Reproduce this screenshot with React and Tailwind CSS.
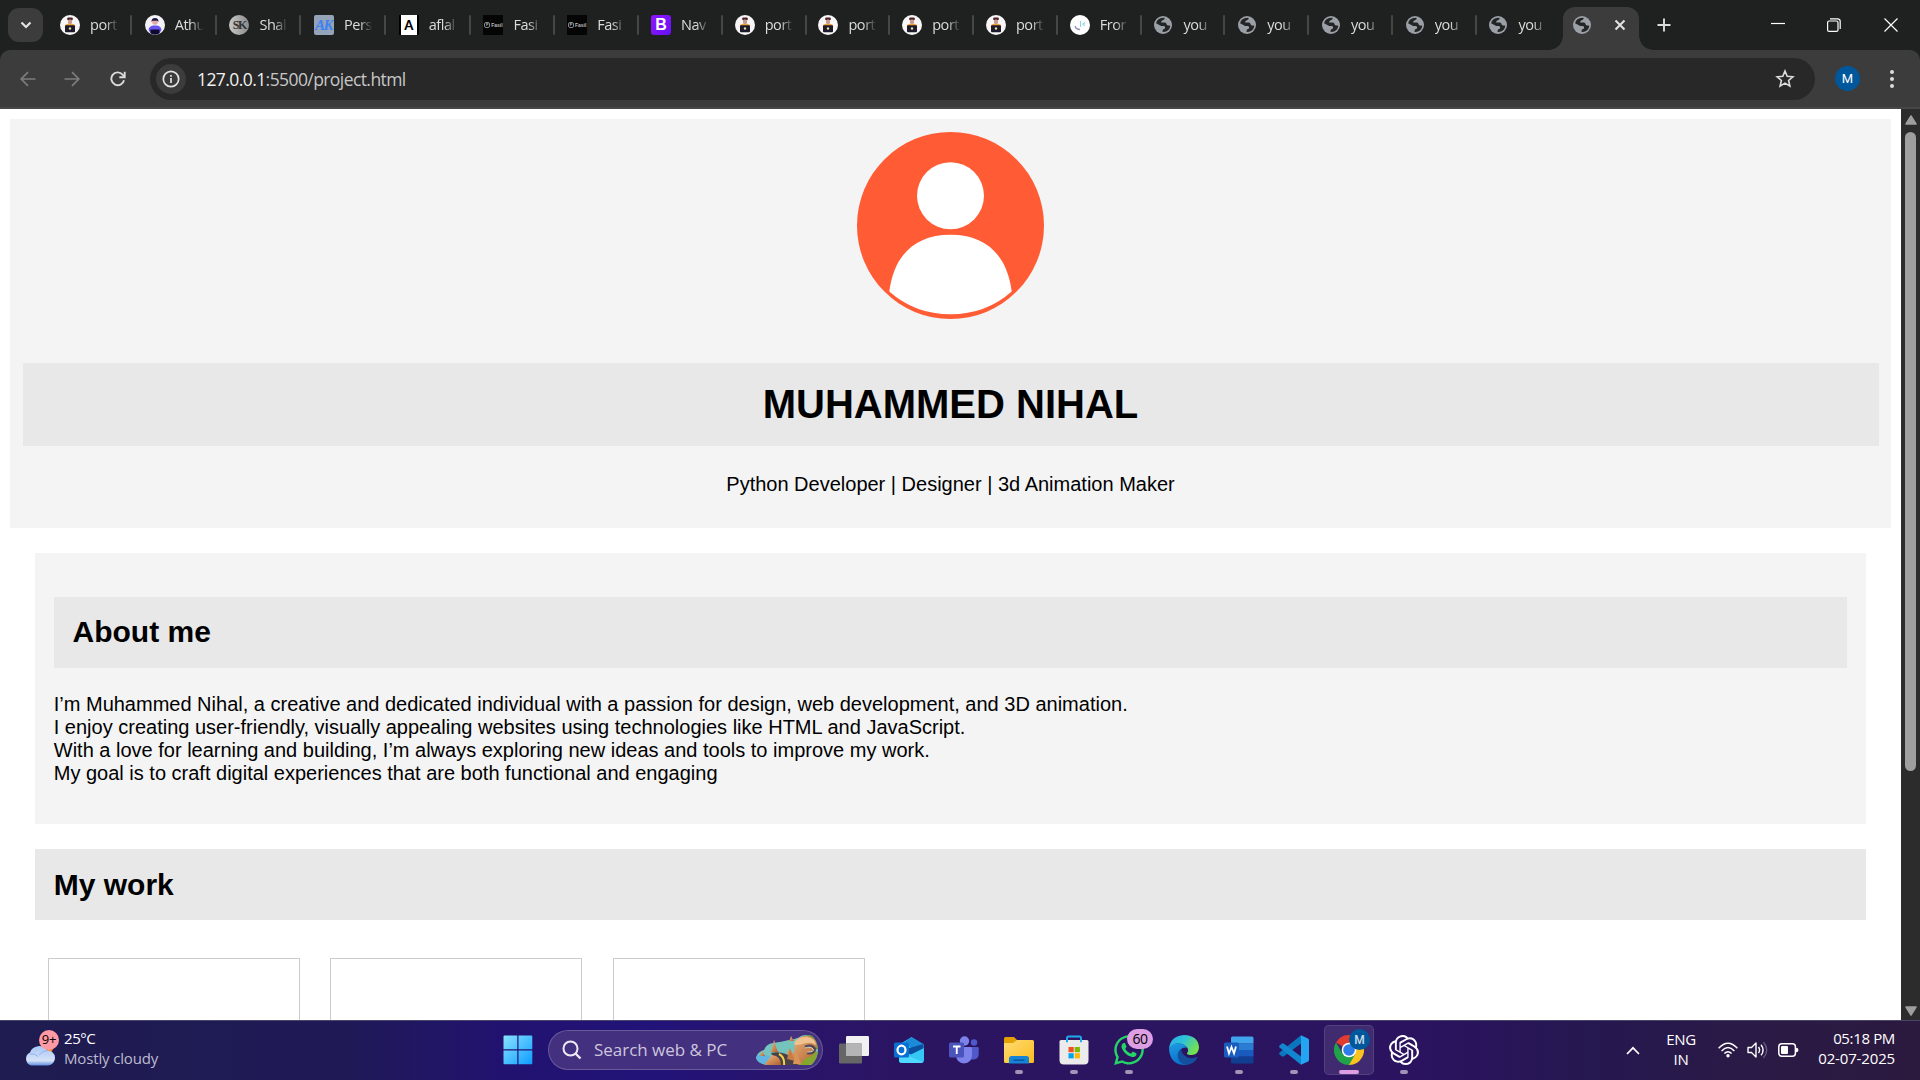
import React from "react";
import { SiOpenai } from "react-icons/si";
import { FaWhatsapp } from "react-icons/fa";

function PortIcon() {
  return (
    <svg viewBox="0 0 20 20" className="size-5">
      <circle cx="10" cy="10" r="10" fill="#f8f6f6" />
      <rect x="7.200" y="2.600" width="5.600" height="2.600" rx="1" fill="#4a2228" />
      <rect x="8" y="4.600" width="4" height="4.400" rx="1.500" fill="#c99a92" />
      <path d="M4.500 11.500Q5 9 8 8.800h4q3 .2 3.500 2.700z" fill="#eda33b" />
      <rect x="5" y="10.200" width="10" height="7" rx="1" fill="#1c1a2b" />
      <circle cx="10" cy="13.500" r="1.200" fill="#e8dfa0" />
    </svg>
  );
}

function AthIcon() {
  return (
    <svg viewBox="0 0 20 20" className="size-5">
      <circle cx="10" cy="10" r="10" fill="#f4f2f7" />
      <path d="M3.500 15Q4 11 8 10.500h4q4 .5 4.500 4.500l-2.500 4H6z" fill="#6655f4" />
      <circle cx="10" cy="7" r="2.800" fill="#e7a9a0" />
      <path d="M6.500 7Q6.300 3 10 3t3.500 4l-1-1.300H7.500z" fill="#1b1740" />
      <path d="M5.500 14.500h9v3.500Q10 21.500 5.500 18z" fill="#0e0a2c" />
    </svg>
  );
}

function SkIcon() {
  return (
    <div className="flex size-5 items-center justify-center rounded-full bg-gradient-to-r from-[#c9c9c9] to-[#8b8b8b] font-['Liberation_Serif',serif] text-[12px] font-bold leading-none tracking-[-1.5px] text-[#333]">
      SK
    </div>
  );
}

function AkIcon() {
  return (
    <div className="flex size-5 items-center justify-center rounded-[2px] bg-[#94a3b8] pr-px font-['Liberation_Serif',serif] text-[15px] font-bold italic leading-none tracking-[-1.5px] text-[#3b82f6]">
      AK
    </div>
  );
}

function AIcon() {
  return (
    <div className="flex size-5 items-center justify-center bg-black">
      <div className="flex h-5 w-4 items-center justify-center bg-white font-['Lato',sans-serif] text-[13px] font-black leading-none text-black">A</div>
    </div>
  );
}

function FasilIcon() {
  return (
    <div className="flex size-5 items-center justify-center gap-px bg-[#050505] font-['Liberation_Sans',sans-serif] text-[5px] font-bold leading-none text-[#bdbdbd]">
      <span className="flex size-[6px] items-center justify-center rounded-[2px] border border-[#888] text-[4px]">F</span>
      Fasil
    </div>
  );
}

function BootIcon() {
  return (
    <div className="flex size-5 items-center justify-center rounded-[3px] bg-gradient-to-br from-[#9013fe] to-[#6610f2] font-['Liberation_Sans',sans-serif] text-[16px] font-bold leading-none text-white">
      B
    </div>
  );
}

function FroIcon() {
  return (
    <svg viewBox="0 0 20 20" className="size-5">
      <circle cx="10" cy="10" r="10" fill="#fff" />
      <path d="M5 11q1 3.500 5 3.500" fill="none" stroke="#8f8fc4" strokeWidth="1.300" />
      <path d="M10.500 6v6M12.500 9.200l2.500-1.700M12.500 9.200l2.500 1.200" fill="none" stroke="#8ed3e0" strokeWidth="1.100" />
    </svg>
  );
}

function GlobeIcon() {
  return (
    <svg viewBox="0 0 20 20" className="size-5 shrink-0">
      <circle cx="10" cy="10" r="9" fill="#9aa0a6" />
      <path d="M11.800 2.900Q11.500 4.800 9.800 5.200 8 5.600 8.200 7.500h3.600q1.600 0 1.700 1.600.1 1.500 1.700 1.400l2-.1Q17 14.500 13.600 16.300 11.500 17.300 9.600 17v-1.300q0-1.500 1.500-1.700 1.300-.3 1-1.800-.2-1.300-1.700-1.300H8.200L3.100 8.200Q4.500 3 10 2.800z" fill="#242625" />
    </svg>
  );
}

const tabs = [
  [PortIcon, "port"],
  [AthIcon, "Athu"],
  [SkIcon, "Shal"],
  [AkIcon, "Pers"],
  [AIcon, "aflal"],
  [FasilIcon, "Fasi"],
  [FasilIcon, "Fasi"],
  [BootIcon, "Nav"],
  [PortIcon, "port"],
  [PortIcon, "port"],
  [PortIcon, "port"],
  [PortIcon, "port"],
  [FroIcon, "Fror"],
  [GlobeIcon, "you"],
  [GlobeIcon, "you"],
  [GlobeIcon, "you"],
  [GlobeIcon, "you"],
  [GlobeIcon, "you"],
];

function Tab({ Icon, label, wide, last }) {
  return (
    <div className={`flex shrink-0 items-center ${wide ? "w-[84.700px]" : "w-[83.750px]"}`}>
      <Icon />
      <div className="ml-[10px] w-[34px] whitespace-nowrap text-[14.500px] leading-5 tracking-[-0.450px] text-[#dcdcdc] [mask-image:linear-gradient(to_right,#000_45%,transparent_84%)]">
        {label}
      </div>
      {!last && <div className="ml-[6px] h-5 w-[2px] rounded bg-[#454746]" />}
    </div>
  );
}

function TabStrip() {
  return (
    <div className="flex h-[50px] shrink-0 items-stretch bg-[#1f2120]">
      <div className="flex w-[60px] shrink-0 items-center pl-2">
        <div className="flex h-[34px] w-[35px] items-center justify-center rounded-[11px] bg-[#3c3c3c]">
          <svg viewBox="0 0 12 8" className="h-2 w-3">
            <path d="M1.500 1.500L6 6l4.500-4.500" fill="none" stroke="#e3e3e3" strokeWidth="2.200" />
          </svg>
        </div>
      </div>
      {tabs.map(([Icon, label], i) => (
        <Tab key={i} Icon={Icon} label={label} wide={i < 5} last={i === tabs.length - 1} />
      ))}
      <div className="-ml-[23px] flex w-[106px] shrink-0 items-end">
        <div className="size-[14px] shrink-0 bg-[radial-gradient(circle_at_0_0,transparent_13.500px,#3c3c3c_14px)]" />
        <div className="flex h-[43px] w-[76px] shrink-0 items-center rounded-t-[12px] bg-[#3c3c3c] pb-[7px] pl-[9px]">
          <GlobeIcon />
          <svg viewBox="0 0 12 12" className="ml-[22px] size-3">
            <path d="M1.500 1.500l9 9M10.500 1.500l-9 9" stroke="#e3e3e3" strokeWidth="2" />
          </svg>
        </div>
        <div className="size-[14px] shrink-0 bg-[radial-gradient(circle_at_100%_0,transparent_13.500px,#3c3c3c_14px)]" />
      </div>
      <div className="flex flex-1 items-center pl-[2px]">
        <svg viewBox="0 0 14 14" className="size-[14px]">
          <path d="M7 .5v13M.5 7h13" stroke="#dcdcdc" strokeWidth="1.900" />
        </svg>
        <div className="ml-auto flex items-center gap-[42px] pr-[22px]">
          <svg viewBox="0 0 14 14" className="size-[14px]">
            <path d="M0 5.500h14" stroke="#fff" strokeWidth="1.200" />
          </svg>
          <svg viewBox="0 0 14 14" className="size-[14px]">
            <rect x=".6" y="3" width="10.400" height="10.400" rx="1.500" fill="none" stroke="#fff" strokeWidth="1.200" />
            <path d="M3 .8h7.500q2.700 0 2.700 2.700V11" fill="none" stroke="#fff" strokeWidth="1.200" />
          </svg>
          <svg viewBox="0 0 14 14" className="ml-[1px] size-[14px]">
            <path d="M.5.500l13 13M13.500.500l-13 13" stroke="#fff" strokeWidth="1.200" />
          </svg>
        </div>
      </div>
    </div>
  );
}

function Toolbar() {
  return (
    <div className="h-[59px] shrink-0 bg-[#1f2120]">
      <div className="flex h-full items-center rounded-t-[10px] border-b-2 border-[#474747] bg-[#3c3c3c] pl-[20px]">
        <svg viewBox="0 0 16 16" className="size-4">
          <path d="M15.500 8H1.500M8 1.200L1.200 8 8 14.800" fill="none" stroke="#7c7c7c" strokeWidth="1.700" />
        </svg>
        <svg viewBox="0 0 16 16" className="ml-[28px] size-4">
          <path d="M.5 8h14M8 1.200L14.800 8 8 14.800" fill="none" stroke="#7c7c7c" strokeWidth="1.700" />
        </svg>
        <svg viewBox="0 0 16 16" className="ml-[30px] size-4">
          <path d="M14 9.200A6.400 6.400 0 1 1 12.600 3.600L14.500 5.500" fill="none" stroke="#dcdcdc" strokeWidth="1.900" />
          <path d="M14.700.800V6.200H9.300" fill="none" stroke="#dcdcdc" strokeWidth="1.900" />
        </svg>
        <div className="ml-[24px] flex h-[42px] w-[1665px] items-center rounded-full bg-[#282828] pl-[6px] pr-[20px]">
          <div className="flex size-[30px] items-center justify-center rounded-full bg-[#3c3c3c]">
            <svg viewBox="0 0 18 18" className="size-[18px]">
              <circle cx="9" cy="9" r="7.700" fill="none" stroke="#e3e3e3" strokeWidth="1.700" />
              <path d="M9 8v5M9 5v1.700" stroke="#e3e3e3" strokeWidth="1.700" />
            </svg>
          </div>
          <div className="ml-[11px] text-[17.500px] leading-6 tracking-[-0.580px] text-[#c7c7c7]">
            <span className="text-[#f1f1f1]">127.0.0.1</span>:5500/project.html
          </div>
          <svg viewBox="0 0 20 20" className="ml-auto size-5">
            <path d="M10 2l2.200 5.300 5.700.5-4.300 3.700 1.300 5.600L10 14.100l-4.900 3 1.300-5.600L2.100 7.800l5.700-.5z" fill="none" stroke="#dcdcdc" strokeWidth="1.600" />
          </svg>
        </div>
        <div className="ml-[20px] flex size-[25px] items-center justify-center rounded-full bg-[#01579b] font-['Roboto',sans-serif] text-[13px] leading-none text-white">
          M
        </div>
        <div className="ml-[30px] flex flex-col gap-[3px]">
          <div className="size-1 rounded-full bg-[#dcdcdc]" />
          <div className="size-1 rounded-full bg-[#dcdcdc]" />
          <div className="size-1 rounded-full bg-[#dcdcdc]" />
        </div>
      </div>
    </div>
  );
}

function Portfolio() {
  return (
    <main className="h-full flex-1 overflow-hidden bg-white p-[10px] font-['Liberation_Sans',Arial,sans-serif] text-[20px] leading-[23px] text-black">
      <header className="h-[409px] bg-[#f4f4f4] px-[12.500px] pt-[13px] text-center">
        <svg viewBox="0 0 187 187" className="mx-auto block size-[187px]">
          <circle cx="93.500" cy="93.500" r="93.500" fill="#ff5c35" />
          <circle cx="93.500" cy="63.700" r="33.500" fill="#fff" />
          <path d="M32.300 159.500C37 123 58 102.700 93.500 102.700S150 123 154.700 159.500Q129 182.300 93.500 182.300T32.300 159.500z" fill="#fff" />
        </svg>
        <h1 className="mt-[44px] bg-[#e8e8e8] py-[19px] text-[40px] font-bold leading-[45px]">MUHAMMED NIHAL</h1>
        <p className="mt-[27px]">Python Developer | Designer | 3d Animation Maker</p>
      </header>
      <div className="mx-[25px] mt-[25px]">
        <section className="h-[271px] bg-[#f4f4f4] px-[18.750px] pt-[44px]">
          <h2 className="bg-[#e8e8e8] px-[18.750px] pb-[19px] pt-[18px] text-[30px] font-bold leading-[34px]">About me</h2>
          <p className="mt-[25px]">
            I’m Muhammed Nihal, a creative and dedicated individual with a passion for design, web development, and 3D animation.
            <br />
            I enjoy creating user-friendly, visually appealing websites using technologies like HTML and JavaScript.
            <br />
            With a love for learning and building, I’m always exploring new ideas and tools to improve my work.
            <br />
            My goal is to craft digital experiences that are both functional and engaging
          </p>
        </section>
        <section className="mt-[25px]">
          <h2 className="bg-[#e8e8e8] px-[18.750px] pb-[18px] pt-[19px] text-[30px] font-bold leading-[34px]">My work</h2>
          <div className="mt-[38px] flex gap-[30.500px] pl-[12.750px]">
            <div className="h-[250px] w-[252px] border border-[#ccc]" />
            <div className="h-[250px] w-[252px] border border-[#ccc]" />
            <div className="h-[250px] w-[252px] border border-[#ccc]" />
          </div>
        </section>
      </div>
    </main>
  );
}

function Scrollbar() {
  return (
    <div className="flex w-[19px] shrink-0 flex-col items-center bg-[#2c2c2c] pb-[4px] pt-[6px]">
      <svg viewBox="0 0 12 10" className="h-[10px] w-3">
        <path d="M6 1l5 8H1z" fill="#9f9f9f" stroke="#9f9f9f" strokeLinejoin="round" strokeWidth="1.500" />
      </svg>
      <div className="mt-[7px] h-[639px] w-[11px] rounded-full bg-[#9f9f9f]" />
      <svg viewBox="0 0 12 10" className="mt-auto h-[10px] w-3">
        <path d="M6 9l5-8H1z" fill="#9f9f9f" stroke="#9f9f9f" strokeLinejoin="round" strokeWidth="1.500" />
      </svg>
    </div>
  );
}

function Weather() {
  return (
    <div className="flex w-[492px] shrink-0 items-center pb-[5px] pl-[24px]">
      <div className="relative h-[36px] w-[36px]">
        <svg viewBox="0 0 36 36" className="size-9">
          <defs>
            <linearGradient id="cloud" x1="0" y1="0" x2="0" y2="1">
              <stop offset="0" stopColor="#a9c6f7" />
              <stop offset=".75" stopColor="#d4e2f7" />
              <stop offset="1" stopColor="#5f8ee0" />
            </linearGradient>
          </defs>
          <circle cx="23" cy="18" r="6" fill="#f7861b" />
          <path d="M7 35.500A7 7 0 0 1 6 22.500 9.500 9.500 0 0 1 23 20.500 7.500 7.500 0 0 1 24 35.500z" fill="url(#cloud)" />
          <path d="M6 24q5-1 8 2.500M15 25q4-4.500 9-4.500" fill="none" stroke="#8fb2ee" strokeWidth="1" />
        </svg>
        <div className="absolute left-[15px] top-0 flex size-5 items-center justify-center rounded-full bg-[#ff99a4] text-[13px] leading-none tracking-[-0.300px] text-black">9+</div>
      </div>
      <div className="ml-1 text-[15px] leading-5">
        <div className="tracking-[-0.450px] text-white">25°C</div>
        <div className="tracking-[-0.150px] text-[#bdbbd0]">Mostly cloudy</div>
      </div>
    </div>
  );
}

function StartIcon() {
  return (
    <svg viewBox="0 0 30 30" className="size-[30px]">
      <defs>
        <linearGradient id="win" gradientUnits="userSpaceOnUse" x1="0" y1="0" x2="30" y2="30">
          <stop offset="0" stopColor="#8ce4ff" />
          <stop offset="1" stopColor="#0a9bff" />
        </linearGradient>
      </defs>
      <path d="M.5 1.500q0-1 1-1h12.800v13.800H.5zM15.500.500h12.800q1 0 1 1v12.800H15.500zM.5 15.500h13.800v13.800H1.500q-1 0-1-1zM15.500 15.500h13.800v12.800q0 1-1 1H15.500z" fill="url(#win)" />
    </svg>
  );
}

function RoadArt() {
  return (
    <svg viewBox="0 0 64 32" className="h-8 w-16">
      <defs>
        <clipPath id="road-clip">
          <path d="M1 24Q2 18 9 16 11 10 18 9 26 8 34 6 42 5 46 2 52 0 57 2 62 6 63 15 63 25 56 31H13Q3 30 1 24z" />
        </clipPath>
        <linearGradient id="rock" x1="0" y1="0" x2="1" y2="1">
          <stop offset="0" stopColor="#f3bd85" />
          <stop offset="1" stopColor="#b0602f" />
        </linearGradient>
      </defs>
      <g clipPath="url(#road-clip)">
        <rect width="64" height="32" fill="#74c3bd" />
        <path d="M0 22q10-4 18 2l-4 8H0z" fill="#62b5e3" />
        <path d="M44 6q8-8 20-3v12H46z" fill="#6d8f35" />
        <path d="M38 32q10-16 26-14v14z" fill="#86a52e" />
        <path d="M40 9q2-7 12-7 9 1 10 10-1 10-11 12l-8 8H29l4-16 6 3z" fill="url(#rock)" />
        <path d="M39 9q3-6 13-6 8 1 9 8-5-3-10-2-5 2-11 2z" fill="#f0c28f" />
        <path d="M50 13q7-3 10 2-1 5-8 4" fill="none" stroke="#4e4a55" strokeWidth="2.600" />
        <path d="M50 14q6-2 8 1t-6 3" fill="none" stroke="#d9d1c4" strokeWidth="1" />
        <path d="M16 19q7-2 15 1 9 5 13 12H24z" fill="#494348" />
        <path d="M9 31l8-10q9 1 9 10z" fill="url(#rock)" />
        <path d="M24 20q6 3 5 12" fill="none" stroke="#f2d44b" strokeWidth="2" />
        <path d="M32 25l3-11 5 13z" fill="#c87d46" />
        <path d="M38 30l3-13 5 13z" fill="#d9935a" />
      </g>
      <path d="M15.500 18q2-2 3.500-12.500Q21.500 16 23.500 18z" fill="url(#rock)" />
      <path d="M34 7q1-1 2-5 2 4 3 5z" fill="url(#rock)" />
      <path d="M5 22q1-1 2-5.500 2 4 3 5.500z" fill="url(#rock)" />
    </svg>
  );
}

function SearchBox() {
  return (
    <div className="ml-[15px] flex h-10 w-[275px] shrink-0 items-center rounded-full border border-white/20 bg-[#43307f] pl-[13px] pr-[3px]">
      <svg viewBox="0 0 20 20" className="size-5">
        <circle cx="8.500" cy="8.500" r="7" fill="none" stroke="#ece9f4" strokeWidth="2" />
        <path d="M13.500 13.500l5 5" stroke="#ece9f4" strokeWidth="2.400" />
      </svg>
      <div className="ml-[12px] whitespace-nowrap text-[17px] leading-6 tracking-[-0.020px] text-[#cdc6dc]">Search web &amp; PC</div>
      <div className="ml-auto">
        <RoadArt />
      </div>
    </div>
  );
}

function TaskViewIcon() {
  return (
    <svg viewBox="0 0 30 30" className="size-[30px]">
      <rect x="7" y="1" width="23" height="20" rx="1.200" fill="#f1f1f1" />
      <rect x="0" y="8.500" width="23" height="20" rx="1.200" fill="#666" />
      <path d="M7 8.500h16V21H7z" fill="#b4b3b6" />
    </svg>
  );
}

function OutlookIcon() {
  return (
    <svg viewBox="0 0 30 30" className="size-[30px]">
      <path d="M5 9.500L17.500 2 30 9.500V15L17 22 5 15z" fill="#28a8ea" />
      <path d="M17 2.500L29 9l-9 6-9-8z" fill="#1b8ad8" />
      <path d="M12 14L29.500 9v5L16 20z" fill="#0b4f9e" />
      <path d="M5 15.500l12 4L30 13v12q0 3-3 3H8q-3 0-3-3z" fill="#35c8f4" />
      <path d="M5 17l24 10q-1 1-3 1H8q-3 0-3-3z" fill="#50d9ff" />
      <rect x="0" y="7.500" width="15" height="15" rx="1.500" fill="#0a6fd2" />
      <ellipse cx="7.500" cy="15" rx="4" ry="4.300" fill="none" stroke="#fff" strokeWidth="2.200" />
    </svg>
  );
}

function TeamsIcon() {
  return (
    <svg viewBox="0 0 30 30" className="size-[30px]">
      <circle cx="15.500" cy="6" r="4.700" fill="#7b83eb" />
      <circle cx="25" cy="7.500" r="3.200" fill="#5059c9" />
      <path d="M19 12h9.500q1.200 0 1.200 1.200v6q0 5-5 5.300H19z" fill="#5059c9" />
      <path d="M7 12h14.500q1.500 0 1.500 1.500v7Q22.500 28 15 28.500 7.500 28 7 20z" fill="#7b83eb" />
      <rect x="0" y="7.500" width="15" height="15" rx="1.500" fill="#4b53bc" />
      <path d="M4 11.500h7.500M7.750 11.500V19" stroke="#fff" strokeWidth="1.900" />
    </svg>
  );
}

function ExplorerIcon() {
  return (
    <svg viewBox="0 0 30 30" className="size-[30px]">
      <defs>
        <linearGradient id="folder" x1="0" y1="0" x2="1" y2="1">
          <stop offset="0" stopColor="#ffdc75" />
          <stop offset="1" stopColor="#fbbc1c" />
        </linearGradient>
      </defs>
      <path d="M0 3.500Q0 2 1.500 2H10l3 3v5H0z" fill="#e5a003" />
      <path d="M0 8h9l4-3h15.500Q30 5 30 6.500v20q0 1.500-1.500 1.500h-27Q0 28 0 26.500z" fill="url(#folder)" />
      <path d="M5 28.500v-5Q5 21 7.500 21h15q2.500 0 2.500 2.500v5z" fill="#1583d6" />
      <path d="M9.500 25.200h11" stroke="#0b58a0" strokeWidth="1.600" />
    </svg>
  );
}

function StoreIcon() {
  return (
    <svg viewBox="0 0 30 30" className="size-[30px]">
      <path d="M8 7V2.800Q8 1.500 9.300 1.500h11.400q1.300 0 1.300 1.300V7" fill="none" stroke="#1fa9ee" strokeWidth="1.900" />
      <path d="M.5 6.500Q.5 5 2 5h26q1.500 0 1.500 1.500V25q0 4.500-4.500 4.500H5Q.5 29.500.5 25z" fill="#ebebec" />
      <path d="M8 4v3.200M22 4v3.200" stroke="#1fa9ee" strokeWidth="1.900" />
      <rect x="9.500" y="12" width="5.200" height="5.200" fill="#f25022" />
      <rect x="15.700" y="12" width="5.200" height="5.200" fill="#7fba00" />
      <rect x="9.500" y="18.200" width="5.200" height="5.200" fill="#00a4ef" />
      <rect x="15.700" y="18.200" width="5.200" height="5.200" fill="#ffb900" />
    </svg>
  );
}

function WhatsappIcon() {
  return (
    <div className="relative size-[30px]">
      <FaWhatsapp className="-ml-[2px] -mt-[2px] size-[34px] text-[#25d366]" />
      <div className="absolute -top-[6px] left-[13px] flex h-5 w-[26px] items-center justify-center rounded-full bg-[#dd9ee3] text-[14px] leading-none tracking-[-0.400px] text-black">60</div>
    </div>
  );
}

function EdgeIcon() {
  return (
    <svg viewBox="0 0 30 30" className="size-[30px]">
      <defs>
        <linearGradient id="edge-top" x1="0" y1="0" x2="1" y2=".5">
          <stop offset="0" stopColor="#2aa9e8" />
          <stop offset=".5" stopColor="#2fc3d8" />
          <stop offset="1" stopColor="#74e24e" />
        </linearGradient>
        <linearGradient id="edge-left" x1="0" y1="0" x2=".3" y2="1">
          <stop offset="0" stopColor="#1e9de4" />
          <stop offset="1" stopColor="#0b6fcb" />
        </linearGradient>
      </defs>
      <path d="M0 14Q1 1 15 0q14 .5 15 12 0 7-7 8-5.500 0-5-2 2-2 .5-5Q15 8 8 8.500 3 9 0 14z" fill="url(#edge-top)" />
      <path d="M0 14Q3 8 10 8.300q6 .5 8 4.500-4-1-6.500 2-3 5 .5 9.500 4 5 10 4-4 2-9 1.500Q1 28 0 14z" fill="url(#edge-left)" />
      <path d="M12 14.300Q7.500 17 9 23q2.500 6.500 8 6.800 8-.3 11.500-7.300.3-1-.7-.5-6 2.500-11-.5-4-2.500-4.800-7.200z" fill="#134f9c" />
    </svg>
  );
}

function WordIcon() {
  return (
    <svg viewBox="0 0 30 30" className="size-[30px]">
      <path d="M7 3q0-1.500 1.500-1.500H28Q29.500 1.500 29.500 3v5.500H7z" fill="#41a5ee" />
      <path d="M7 8.300h22.500V15H7z" fill="#2b7cd3" />
      <path d="M7 15h22.500v6.700H7z" fill="#185abd" />
      <path d="M7 21.700h22.500V27q0 1.500-1.500 1.500H8.500Q7 28.500 7 27z" fill="#103f91" />
      <rect x="0" y="7.500" width="15" height="15" rx="1.500" fill="#1a5cbe" />
      <path d="M3 11.500l2 7 2.500-6.500L10 18.500l2-7" fill="none" stroke="#fff" strokeWidth="1.800" />
    </svg>
  );
}

function VscodeIcon() {
  return (
    <svg viewBox="0 0 30 30" className="size-[30px]">
      <path d="M22 .3V8.500L5 21.300q-1.200.9-2.300 0L.6 19.400q-.9-1 0-2z" fill="#0a76be" />
      <path d="M22 29.700V21.500L5 8.700q-1.200-.9-2.300 0L.6 10.600q-.9 1 0 2z" fill="#1287d0" />
      <path d="M22 .3L29 3.500Q30 4 30 5v20q0 1-1 1.500L22 29.700z" fill="#24a5f2" />
    </svg>
  );
}

function ChromeIcon() {
  return (
    <div className="relative size-[30px]">
      <svg viewBox="0 0 30 30" className="size-[30px]">
        <path d="M15 15L2 7.500A15 15 0 0 1 28 7.500z" fill="#e33b2e" />
        <path d="M15 15V7.500h13A15 15 0 0 1 15 30z" fill="#fcc31e" />
        <path d="M2 7.500L8.500 18.700 15 22l6.500-3.200L15 30A15 15 0 0 1 2 7.500z" fill="#1fa24a" />
        <circle cx="15" cy="15" r="7.300" fill="#fff" />
        <circle cx="15" cy="15" r="5.800" fill="#2f7de9" />
      </svg>
      <div className="absolute -top-[6px] left-[15px] flex size-[21px] items-center justify-center rounded-full bg-[#01579b] font-['Roboto',sans-serif] text-[12px] font-medium leading-none text-[#c9dceb]">M</div>
    </div>
  );
}

function TaskButton({ children, running, active }) {
  return (
    <div className="flex w-[55px] shrink-0 items-center justify-center">
      <div className={`flex h-[50px] w-[50px] flex-col items-center rounded-[5px] border pt-[9px] ${active ? "border-white/10 bg-white/10" : "border-transparent"}`}>
        {children}
        {running && !active && <div className="mt-[5px] h-1 w-2 rounded-full bg-[#a093b6]" />}
        {active && <div className="mt-[5px] h-1 w-5 rounded-full bg-[#dd9ee3]" />}
      </div>
    </div>
  );
}

function Tray() {
  return (
    <div className="ml-auto flex shrink-0 items-center pr-[25px] text-[15px] leading-5 text-white">
      <svg viewBox="0 0 14 9" className="h-[9px] w-[14px]">
        <path d="M1 8l6-6.200L13 8" fill="none" stroke="#fff" strokeWidth="1.700" />
      </svg>
      <div className="ml-[26px] w-[30px] pb-[3px] text-center tracking-[-0.350px]">
        ENG
        <br />
        IN
      </div>
      <svg viewBox="0 0 20 16" className="ml-[22px] h-4 w-5">
        <g fill="none" stroke="#fff" strokeWidth="1.500">
          <path d="M.6 6.200Q10-3.800 19.400 6.200" />
          <path d="M3.600 9Q10 2.200 16.400 9" />
          <path d="M6.400 11.600Q10 7.800 13.600 11.600" />
        </g>
        <circle cx="10" cy="13.800" r="1.700" fill="#fff" />
      </svg>
      <svg viewBox="0 0 22 18" className="ml-[9px] h-[18px] w-[22px]">
        <path d="M1 6.500h3.500L9 2v14l-4.500-4.500H1z" fill="none" stroke="#fff" strokeWidth="1.400" strokeLinejoin="round" />
        <path d="M11.500 6q2.200 3 0 6M14 3.700q4.200 5.300 0 10.600" fill="none" stroke="#fff" strokeWidth="1.400" />
        <path d="M16.500 1.200q6.500 7.800 0 15.600" fill="none" stroke="#675781" strokeWidth="1.400" />
      </svg>
      <svg viewBox="0 0 21 14" className="ml-[9px] h-[14px] w-[21px]">
        <rect x=".8" y=".8" width="16.600" height="12.400" rx="3" fill="none" stroke="#fff" strokeWidth="1.500" />
        <rect x="3" y="3" width="7" height="8" rx="1" fill="#fff" />
        <path d="M18 4.800q2.500 0 2.500 2.200T18 9.200z" fill="#fff" />
      </svg>
      <div className="ml-[18px] w-[78px] whitespace-nowrap pb-[4px] text-right tracking-[-0.150px]">
        <div className="tracking-[-0.350px]">05:18 PM</div>
        <div>02-07-2025</div>
      </div>
    </div>
  );
}

function Taskbar() {
  return (
    <div className="flex h-[60px] shrink-0 border-t border-[#49456b] bg-[linear-gradient(90deg,#1f1c50_0%,#1f1a56_18%,#22126f_26%,#221379_34%,#29146a_42%,#2b1560_48%,#2b1360_74%,#261850_83%,#2a1a45_92%,#2b193e_100%)] pb-px">
      <Weather />
      <div className="-ml-px flex items-center">
        <div className="ml-[12px]">
          <StartIcon />
        </div>
        <SearchBox />
      </div>
      <div className="ml-[3.500px] flex">
        <TaskButton><TaskViewIcon /></TaskButton>
        <TaskButton><OutlookIcon /></TaskButton>
        <TaskButton><TeamsIcon /></TaskButton>
        <TaskButton running><ExplorerIcon /></TaskButton>
        <TaskButton running><StoreIcon /></TaskButton>
        <TaskButton running><WhatsappIcon /></TaskButton>
        <TaskButton><EdgeIcon /></TaskButton>
        <TaskButton running><WordIcon /></TaskButton>
        <TaskButton running><VscodeIcon /></TaskButton>
        <TaskButton running active><ChromeIcon /></TaskButton>
        <TaskButton running><SiOpenai className="size-[30px] text-white" /></TaskButton>
      </div>
      <Tray />
    </div>
  );
}

export default function App() {
  return (
    <div className="flex h-[1080px] w-[1920px] flex-col overflow-hidden font-['Open_Sans','Noto_Sans',sans-serif]">
      <TabStrip />
      <Toolbar />
      <div className="flex h-[911px] shrink-0">
        <Portfolio />
        <Scrollbar />
      </div>
      <Taskbar />
    </div>
  );
}
